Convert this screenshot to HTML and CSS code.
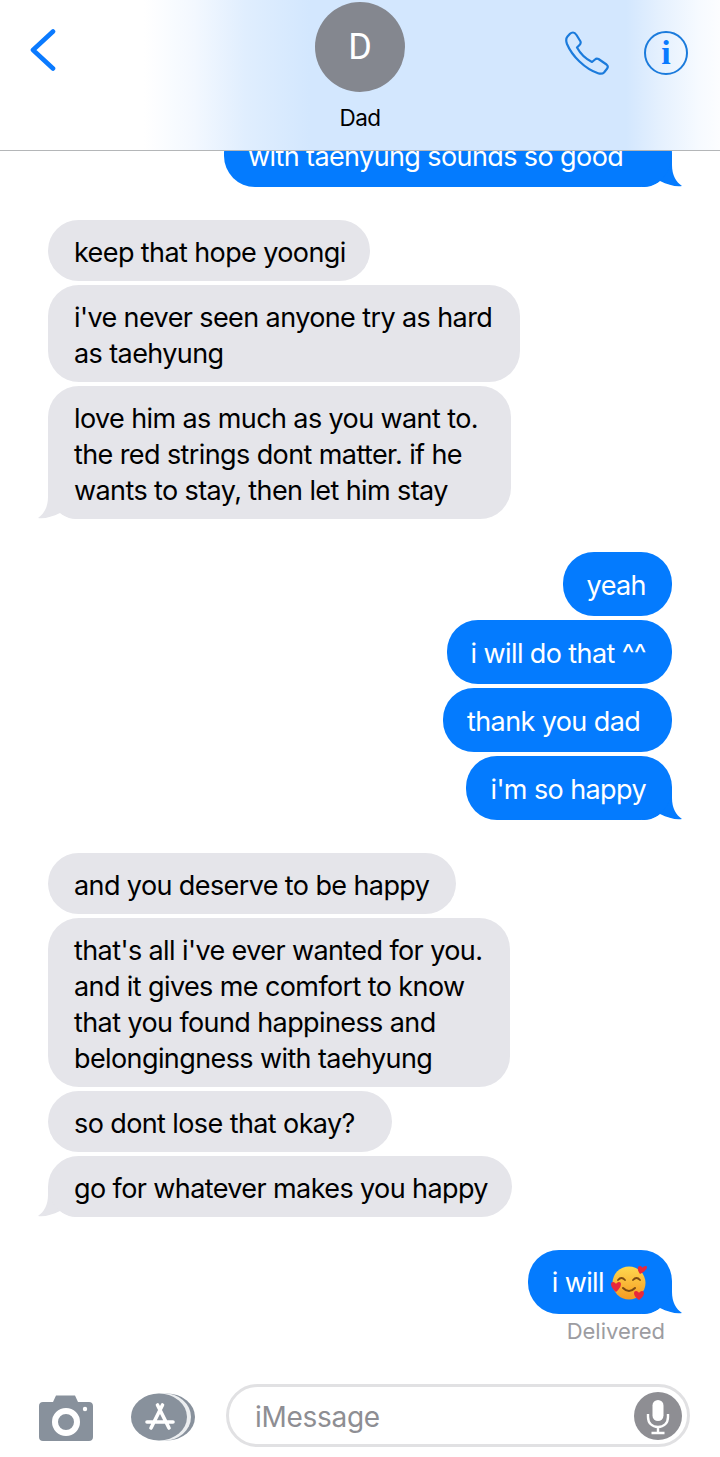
FILE: index.html
```html
<!doctype html>
<html>
<head>
<meta charset="utf-8">
<title>Dad</title>
<link rel="stylesheet" href="styles.css">
</head>
<body>
<div id="phone">

  <div class="header">
    <svg class="back" viewBox="0 0 26 42"><path d="M23 2.5 L3 21 L23 39.5"/></svg>
    <div class="contact">
      <div class="avatar">D</div>
      <div class="name">Dad</div>
    </div>
    <div class="actions">
      <svg class="call" viewBox="0 0 44 44"><path d="M8 1.5 C9.5 1.5 10.5 2.5 11.5 4 L15.5 10.5 C16 12 15.5 13 14.5 14 L12 16.5 C15 22 21 28 27 31 L30 28.5 C31 27.5 32 27.2 33.5 28 L41.5 33.5 C43 34.8 43 36.5 42 37.8 L39 41.5 C37.5 43 35.5 43 33 42.2 C20 38 7 25 2 13 C0.7 9.5 0.8 7.5 2.5 5.5 L5 2.8 C6 1.8 7 1.5 8 1.5 Z"/></svg>
      <div class="info">i</div>
    </div>
  </div>

  <div class="thread">

    <div class="group me">
      <div class="bubble tail w448">with taehyung sounds so good<svg class="tip" viewBox="0 0 40 40"><path d="M10 9 V18 C10 28 6 35 0 39 C6 40 14 38 22 34 C28 39 34 40 40 40 V9 Z"/></svg></div>
    </div>

    <div class="group dad">
      <div class="bubble">keep that hope yoongi</div>
      <div class="bubble w472">i've never seen anyone try as hard<br>as taehyung</div>
      <div class="bubble tail w463">love him as much as you want to.<br>the red strings dont matter. if he<br>wants to stay, then let him stay<svg class="tip" viewBox="0 0 40 40"><path d="M10 9 V18 C10 28 6 35 0 39 C6 40 14 38 22 34 C28 39 34 40 40 40 V9 Z"/></svg></div>
    </div>

    <div class="group me">
      <div class="bubble">yeah</div>
      <div class="bubble">i will do that ^^</div>
      <div class="bubble w229">thank you dad</div>
      <div class="bubble tail">i'm so happy<svg class="tip" viewBox="0 0 40 40"><path d="M10 9 V18 C10 28 6 35 0 39 C6 40 14 38 22 34 C28 39 34 40 40 40 V9 Z"/></svg></div>
    </div>

    <div class="group dad">
      <div class="bubble w408">and you deserve to be happy</div>
      <div class="bubble w462">that's all i've ever wanted for you.<br>and it gives me comfort to know<br>that you found happiness and<br>belongingness with taehyung</div>
      <div class="bubble w344">so dont lose that okay?</div>
      <div class="bubble tail">go for whatever makes you happy<svg class="tip" viewBox="0 0 40 40"><path d="M10 9 V18 C10 28 6 35 0 39 C6 40 14 38 22 34 C28 39 34 40 40 40 V9 Z"/></svg></div>
    </div>

    <div class="group me">
      <div class="bubble tail withemoji">i will
        <svg class="emoji" viewBox="0 0 38 36">
          <defs>
            <linearGradient id="face" x1="0" y1="0" x2="0" y2="1">
              <stop offset="0" stop-color="#ffd84f"/>
              <stop offset="1" stop-color="#f59a22"/>
            </linearGradient>
          </defs>
          <circle cx="19" cy="18" r="16.5" fill="url(#face)"/>
          <path class="eye" d="M8 15 Q11.5 11 15 15"/>
          <path class="eye" d="M23 15 Q26.5 11 30 15"/>
          <path class="smile" d="M13 23 Q19 29 25 23"/>
          <path class="heart" d="M30 9 C27 5 27 1 30 1 C31.5 1 32 2 32.5 3 C33 2 34 1 35.5 1 C38 1 38 5 30 9 Z"/>
          <path class="heart" d="M6 27 C0 22 0 17 3 17 C4.5 17 5.5 18 6 19 C6.5 18 7.5 17 9 17 C12 17 12 22 6 27 Z"/>
          <path class="heart" d="M29 35 C23 31 23 26 26 26 C27.5 26 28.5 27 29 28 C29.5 27 30.5 26 32 26 C35 26 35 31 29 35 Z"/>
        </svg><svg class="tip" viewBox="0 0 40 40"><path d="M10 9 V18 C10 28 6 35 0 39 C6 40 14 38 22 34 C28 39 34 40 40 40 V9 Z"/></svg></div>
      <div class="status">Delivered</div>
    </div>

  </div>

  <div class="inputbar">
    <svg class="camera" viewBox="0 0 54 46">
      <path d="M4 7 H14 L17 0.5 H36 L39 7 H50 C52.500 7 54 8.500 54 11 V42 C54 44.500 52.500 46 50 46 H4 C1.500 46 0 44.500 0 42 V11 C0 8.500 1.500 7 4 7 Z"/>
      <circle cx="27" cy="27" r="11" class="ring"/>
      <circle cx="46" cy="14" r="2.200" class="dot"/>
    </svg>
    <svg class="appstore" viewBox="0 0 65 48">
      <ellipse cx="36" cy="24" rx="28" ry="23.500" class="back-disc"/>
      <ellipse cx="32" cy="24" rx="28" ry="24" class="gap"/>
      <ellipse cx="28" cy="24" rx="28" ry="23.500" class="disc"/>
      <path class="a" d="M31.500 12 L20 35 M26.500 12 L38 35 M16 29 H42"/>
    </svg>
    <div class="field">
      <span class="placeholder">iMessage</span>
      <div class="mic">
        <svg viewBox="0 0 48 48">
          <rect x="18.500" y="8" width="11" height="21" rx="5.500" class="cap"/>
          <path class="stand" d="M14 22 V25 C14 31 18 35 24 35 C30 35 34 31 34 25 V22 M24 35 V41 M17.500 41 H30.500"/>
        </svg>
      </div>
    </div>
  </div>

</div>
</body>
</html>
```

FILE: styles.css
```css
html, body { margin:0; padding:0; background:#fff; }

#phone {
  display:flex;
  flex-direction:column;
  width:720px;
  height:1457px;
  overflow:hidden;
  font-family:Inter, 'Liberation Sans', sans-serif;
}

/* header */
.header {
  flex:none;
  position:relative;
  z-index:2;
  display:flex;
  align-items:flex-start;
  justify-content:space-between;
  height:150px;
  box-sizing:content-box;
  padding:0 32px 0 30px;
  border-bottom:solid 1px #b4b6b8;
  background:linear-gradient(90deg, #fff 20%, #f3f8ff 27%, #e0eefe 34%, #d3e7fe 43%, #d3e7fe 87%, #e6f1fe 92%, #f6faff 97%, #fcfdff 100%);
}

.back {
  width:26px;
  height:42px;
  margin-top:29px;
  fill:none;
  stroke:#0a7aff;
  stroke-width:4.6;
  stroke-linecap:round;
  stroke-linejoin:round;
}

.contact {
  position:absolute;
  top:2px;
  left:0;
  right:0;
  display:flex;
  flex-direction:column;
  align-items:center;
}

.avatar {
  display:flex;
  align-items:center;
  justify-content:center;
  width:90px;
  height:90px;
  border-radius:50%;
  background:#84878f;
  color:#fff;
  font:400 36px Roboto, sans-serif;
}

.name {
  margin-top:12px;
  font-size:22.5px;
  line-height:28px;
  letter-spacing:-.5px;
  color:#000;
}

.actions {
  display:flex;
  gap:35px;
  margin-top:31px;
}

.call {
  width:44px;
  height:44px;
  fill:none;
  stroke:#1b7bdc;
  stroke-width:2.2;
  stroke-linejoin:round;
}

.info {
  display:flex;
  align-items:center;
  justify-content:center;
  width:44px;
  height:44px;
  box-sizing:border-box;
  border:solid 2px #1b7bdc;
  border-radius:50%;
  color:#0a7aff;
  font:bold 34px 'Liberation Serif', serif;
}

/* messages */
.thread {
  flex:1;
  min-height:0;
  display:flex;
  flex-direction:column;
  justify-content:flex-end;
  gap:33px;
  padding:0 48px 24px;
  overflow:hidden;
}

.group {
  position:relative;
  z-index:0;
  flex:none;
  display:flex;
  flex-direction:column;
  gap:4px;
}

.me { align-items:flex-end; }
.dad { align-items:flex-start; }

.bubble {
  position:relative;
  box-sizing:border-box;
  font-size:27px;
  line-height:36px;
  letter-spacing:-.6px;
  white-space:nowrap;
  border-radius:31px;
}

.me .bubble {
  padding:16px 26px 12px 24px;
  background:#047bfe;
  color:#fff;
}

.dad .bubble {
  padding:14.5px 24px 10.5px 26px;
  background:#e5e5ea;
  color:#000;
}

.w229 { width:229px; }
.w344 { width:344px; }
.w408 { width:408px; }
.w448 { width:448px; }
.w462 { width:462px; }
.w463 { width:463px; }
.w472 { width:472px; }

.tip {
  position:absolute;
  bottom:0;
  width:40px;
  height:40px;
  z-index:-1;
}

.dad .tip { left:-10px; fill:#e5e5ea; }
.me .tip { right:-10px; fill:#047bfe; transform:scaleX(-1); }

.me .withemoji {
  display:flex;
  align-items:center;
  gap:6px;
  padding:15px 24px 13px;
}

.emoji { width:38px; height:36px; }
.eye { fill:none; stroke:#7c4a12; stroke-width:1.8; stroke-linecap:round; }
.smile { fill:none; stroke:#7c4a12; stroke-width:2; stroke-linecap:round; }
.heart { fill:#e8283c; }

.status {
  margin:-1px 7px 0 0;
  font-size:22px;
  line-height:28px;
  color:#9c9ca1;
}

/* input bar */
.inputbar {
  flex:none;
  display:flex;
  align-items:flex-start;
  height:88px;
  padding:0 30px 0 39px;
  box-sizing:border-box;
}

.camera {
  width:54px;
  height:46px;
  margin-top:26px;
  fill:#88919c;
}

.camera .ring { fill:none; stroke:#fff; stroke-width:6; }
.camera .dot { fill:#fff; }

.appstore {
  width:65px;
  height:48px;
  margin:24px 0 0 38px;
}

.appstore .back-disc { fill:#88919c; }
.appstore .gap { fill:#eceef0; }
.appstore .disc { fill:#88919c; }
.appstore .a { fill:none; stroke:#fff; stroke-width:3.6; stroke-linecap:round; }

.field {
  flex:1;
  display:flex;
  align-items:center;
  justify-content:space-between;
  height:63px;
  margin:15px 0 0 30px;
  padding:0 5px 0 26px;
  box-sizing:border-box;
  border:solid 3px #e1e1e3;
  border-radius:32px;
  background:#fff;
}

.placeholder {
  margin-top:3px;
  font-size:28px;
  letter-spacing:-.3px;
  color:#8e8e93;
}

.mic {
  width:48px;
  height:48px;
  border-radius:50%;
  background:#8e8e93;
}

.mic svg { display:block; width:48px; height:48px; }
.mic .cap { fill:#fff; }
.mic .stand { fill:none; stroke:#fff; stroke-width:2.4; }
```
